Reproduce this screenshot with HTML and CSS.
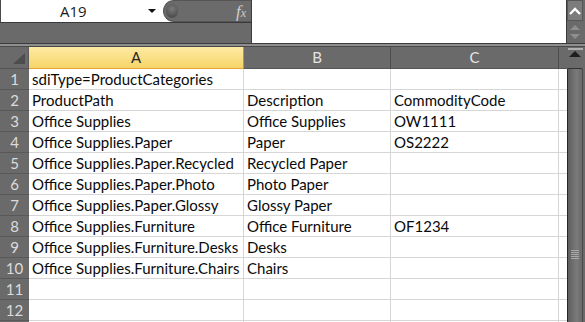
FILE: index.html
```html
<!DOCTYPE html>
<html>
<head>
<meta charset="utf-8">
<link rel="stylesheet" href="styles.css">
</head>
<body>
<div class="app">
  <div class="top">
    <div class="left">
      <div class="namerow">
        <div class="namebox"><span class="ref">A19</span><span class="dd"></span></div>
        <div class="fxbox"><span class="knob"></span><span class="fx"><i>f</i><i class="x">x</i></span></div>
      </div>
      <div class="leftfill"></div>
    </div>
    <div class="formula"></div>
    <div class="vsb-top">
      <div class="btn-up"><svg width="12" height="8" viewBox="0 0 12 8"><path d="M1 7 L6 2 L11 7" fill="none" stroke="#fff" stroke-width="2.4"/></svg></div>
      <div class="spin">
        <svg width="12" height="16" viewBox="0 0 12 16"><path d="M1 6 L6 1 L11 6 Z" fill="#8e8e8e"/><path d="M1 10 L6 15 L11 10 Z" fill="#8e8e8e"/></svg>
      </div>
    </div>
  </div>
  <div class="splitter"></div>
  <div class="main">
    <div class="sheet">
      <div class="corner"><span class="tri"></span></div>
      <div class="ch sel">A</div><div class="ch">B</div><div class="ch">C</div><div class="ch last"></div>

      <div class="rh">1</div><div class="c">sdiType=ProductCategories</div><div class="c"></div><div class="c"></div><div class="c d"></div>
      <div class="rh">2</div><div class="c">ProductPath</div><div class="c">Description</div><div class="c">CommodityCode</div><div class="c d"></div>
      <div class="rh">3</div><div class="c">Office Supplies</div><div class="c">Office Supplies</div><div class="c">OW1111</div><div class="c d"></div>
      <div class="rh">4</div><div class="c">Office Supplies.Paper</div><div class="c">Paper</div><div class="c">OS2222</div><div class="c d"></div>
      <div class="rh">5</div><div class="c">Office Supplies.Paper.Recycled</div><div class="c">Recycled Paper</div><div class="c"></div><div class="c d"></div>
      <div class="rh">6</div><div class="c">Office Supplies.Paper.Photo</div><div class="c">Photo Paper</div><div class="c"></div><div class="c d"></div>
      <div class="rh">7</div><div class="c">Office Supplies.Paper.Glossy</div><div class="c">Glossy Paper</div><div class="c"></div><div class="c d"></div>
      <div class="rh">8</div><div class="c">Office Supplies.Furniture</div><div class="c">Office Furniture</div><div class="c">OF1234</div><div class="c d"></div>
      <div class="rh">9</div><div class="c">Office Supplies.Furniture.Desks</div><div class="c">Desks</div><div class="c"></div><div class="c d"></div>
      <div class="rh">10</div><div class="c">Office Supplies.Furniture.Chairs</div><div class="c">Chairs</div><div class="c"></div><div class="c d"></div>
      <div class="rh">11</div><div class="c"></div><div class="c"></div><div class="c"></div><div class="c d"></div>
      <div class="rh">12</div><div class="c"></div><div class="c"></div><div class="c"></div><div class="c d"></div>
      <div class="rh"></div><div class="c"></div><div class="c"></div><div class="c"></div><div class="c d"></div>
    </div>
    <div class="vsb">
      <div class="splitbox"></div>
      <div class="arrow-up"><svg width="12" height="7" viewBox="0 0 12 7"><path d="M0 7 L6 1 L12 7 Z" fill="#1e1e1e"/></svg></div>
      <div class="track">
        <div class="thumb"><span class="grip"></span></div>
      </div>
    </div>
  </div>
</div>
</body>
</html>
```

FILE: styles.css
```css
html, body {
  margin: 0;
  padding: 0;
  background: #6a6a6a;
}

.app {
  width: 585px;
  height: 322px;
  overflow: hidden;
  background: #6a6a6a;
  font-family: Lato, "Liberation Sans", sans-serif;
}

/* top bar */
.top {
  display: flex;
  height: 43px;
}

.left {
  width: 252px;
  display: flex;
  flex-direction: column;
  border-right: 1px solid #3c3c3c;
  box-sizing: border-box;
}

.namerow {
  display: flex;
  height: 22px;
  border-bottom: 1px solid #3a3a3a;
  background: #ffffff;
  border-left: 1px solid #4a4a4a;
}

.namebox {
  width: 162px;
  position: relative;
  display: flex;
  align-items: center;
}

.ref {
  margin-left: 59px;
  font-family: "Open Sans", sans-serif;
  font-size: 15px;
  color: #1a1a1a;
}

.dd {
  position: absolute;
  left: 147px;
  top: 9px;
  width: 0;
  height: 0;
  border-left: 4px solid transparent;
  border-right: 4px solid transparent;
  border-top: 4px solid #111;
}

.fxbox {
  flex: 1;
  background: #6b6b6b;
  border-radius: 11px 0 0 11px;
  border: 1px solid #565656;
  border-right: none;
  display: flex;
  align-items: center;
  justify-content: space-between;
  padding: 0 5px 0 2px;
}

.knob {
  width: 12px;
  height: 14px;
  border-radius: 50%;
  background: radial-gradient(circle at 50% 35%, #7a7a7a, #4e4e4e 75%);
}

.fx {
  font-family: "Liberation Serif", serif;
  color: #cfcfcf;
  font-size: 17px;
  line-height: 1;
}

.fx .x {
  font-size: 12px;
  margin-left: 0;
}

.leftfill {
  flex: 1;
  background: #6a6a6a;
}

.formula {
  width: 314px;
  background: #ffffff;
  border-right: 1px solid #3a3a3a;
}

.vsb-top {
  width: 18px;
  display: flex;
  flex-direction: column;
  background: #6a6a6a;
}

.btn-up {
  width: 16px;
  height: 21px;
  background: #7c7c7c;
  border: 1px solid #575757;
  box-sizing: border-box;
  display: flex;
  align-items: center;
  justify-content: center;
}

.spin {
  width: 16px;
  flex: 1;
  display: flex;
  align-items: center;
  justify-content: center;
}

.splitter {
  height: 4px;
  box-sizing: border-box;
  border-top: 1px solid #3c3c3c;
  border-bottom: 1px solid #4a4a4a;
  background: #8e8e8e;
}

/* main area */
.main {
  display: flex;
  height: 275px;
}

.sheet {
  width: 567px;
  display: grid;
  grid-template-columns: 29px 215px 147px 168px 8px;
  grid-template-rows: 22px repeat(13, 21px);
  background: #ffffff;
  overflow: hidden;
}

.corner {
  background: #6a6a6a;
  border-right: 1px solid #5a5a5a;
  border-bottom: 1px solid #555;
  position: relative;
}

.tri {
  position: absolute;
  right: 3px;
  bottom: 4px;
  width: 0;
  height: 0;
  border-left: 12px solid transparent;
  border-bottom: 11px solid #4d4d4d;
}

.ch {
  background: #6a6a6a;
  color: #e4e4e4;
  font-size: 15px;
  text-align: center;
  line-height: 21px;
  border-right: 1px solid #4c4c4c;
  border-bottom: 1px solid #555;
  box-sizing: border-box;
}

.ch.last {
  border-right: none;
}

.ch.sel {
  background: linear-gradient(#fdeaa3, #f8d468);
  color: #262626;
  border-right: 1px solid #c99132;
  border-bottom: 1px solid #e3a23a;
}

.rh {
  background: #6a6a6a;
  color: #dcdcdc;
  font-size: 15px;
  text-align: center;
  line-height: 20px;
  border-bottom: 1px solid #585858;
  box-sizing: border-box;
}

.c {
  border-right: 1px solid #d6d6d6;
  border-bottom: 1px solid #d6d6d6;
  box-sizing: border-box;
  font-size: 15px;
  line-height: 20px;
  padding-left: 3px;
  color: #0a0a0a;
  white-space: nowrap;
  overflow: hidden;
}

.c.d {
  border-right: none;
}

/* vertical scrollbar */
.vsb {
  width: 18px;
  display: flex;
  flex-direction: column;
  background: #6a6a6a;
}

.splitbox {
  margin: 1px 2px 0 1px;
  height: 6px;
  border: 1px solid #b0b0b0;
  background: #737373;
}

.arrow-up {
  height: 16px;
  display: flex;
  align-items: center;
  justify-content: center;
  width: 16px;
}

.track {
  flex: 1;
  padding-top: 11px;
  width: 16px;
}

.thumb {
  height: 260px;
  border-left: 1px solid #262626;
  border-right: 1px solid #4a4a4a;
  border-top: 1px solid #333;
  border-radius: 2px 2px 0 0;
  background: linear-gradient(90deg, #5e5e5e, #7a7a7a 60%, #6a6a6a);
  position: relative;
}

.grip {
  position: absolute;
  left: 3px;
  top: 181px;
  width: 8px;
  height: 9px;
  background: repeating-linear-gradient(#a8a8a8 0 1px, transparent 1px 2px);
}
```
